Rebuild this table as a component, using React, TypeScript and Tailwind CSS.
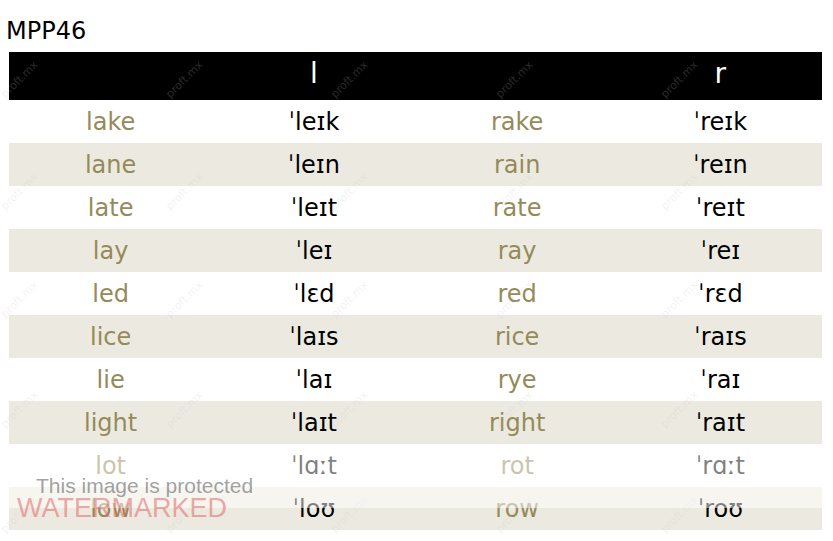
import React from "react";

const rows: [string, string, string, string][] = [
  ["lake", "ˈleɪk", "rake", "ˈreɪk"],
  ["lane", "ˈleɪn", "rain", "ˈreɪn"],
  ["late", "ˈleɪt", "rate", "ˈreɪt"],
  ["lay", "ˈleɪ", "ray", "ˈreɪ"],
  ["led", "ˈlɛd", "red", "ˈrɛd"],
  ["lice", "ˈlaɪs", "rice", "ˈraɪs"],
  ["lie", "ˈlaɪ", "rye", "ˈraɪ"],
  ["light", "ˈlaɪt", "right", "ˈraɪt"],
  ["lot", "ˈlɑːt", "rot", "ˈrɑːt"],
  ["low", "ˈloʊ", "row", "ˈroʊ"],
];

const wmX = [20, 185, 350, 515, 680];
const wmY = [80, 192, 300, 410, 515];

export default function App() {
  return (
    <div
      className="relative w-[833px] h-[541px] bg-white overflow-hidden"
      style={{ fontFamily: '"DejaVu Sans", Verdana, sans-serif' }}
    >
      <div className="h-[52px] pl-[6px] pt-[17px] text-[24px] leading-[28px] text-black">
        MPP46
      </div>
      <div className="mx-[9px] w-[813px]">
        <div className="grid grid-cols-4 h-[48px] bg-black text-white text-[28px] items-center">
          <div />
          <div className="text-center pb-[4px]">l</div>
          <div />
          <div className="text-center pb-[4px]">r</div>
        </div>
        {rows.map((r, i) => (
          <div
            key={i}
            className={
              "grid grid-cols-4 h-[43px] items-center text-[24px] " +
              (i % 2 === 1 ? "bg-[#eceae0]" : "bg-white")
            }
          >
            <div className="text-center text-[#958a59]">{r[0]}</div>
            <div className="text-center text-black">{r[1]}</div>
            <div className="text-center text-[#958a59]">{r[2]}</div>
            <div className="text-center text-black">{r[3]}</div>
          </div>
        ))}
      </div>

      {/* tiled watermark */}
      <div className="absolute inset-0 pointer-events-none">
        {wmY.map((y) =>
          wmX.map((x) => (
            <span
              key={x + "-" + y}
              className="absolute text-[11px] leading-none text-[rgba(200,200,200,0.22)] -rotate-45 whitespace-nowrap"
              style={{ left: x - 24, top: y - 6 }}
            >
              proft.mx
            </span>
          ))
        )}
      </div>

      {/* bottom fade overlay */}
      <div className="absolute left-0 top-[445px] w-full h-[63px] bg-white/50" />

      <div
        className="absolute left-[36px] top-[474px] text-[21px] leading-[24px] text-[rgba(120,120,120,0.7)] whitespace-nowrap"
        style={{ fontFamily: '"Liberation Sans", Arial, sans-serif' }}
      >
        This image is protected
      </div>
      <div
        className="absolute left-[17px] top-[493px] text-[27px] leading-[30px] text-[rgba(225,100,100,0.55)] whitespace-nowrap"
        style={{ fontFamily: '"Liberation Sans", Arial, sans-serif' }}
      >
        WATERMARKED
      </div>
    </div>
  );
}
